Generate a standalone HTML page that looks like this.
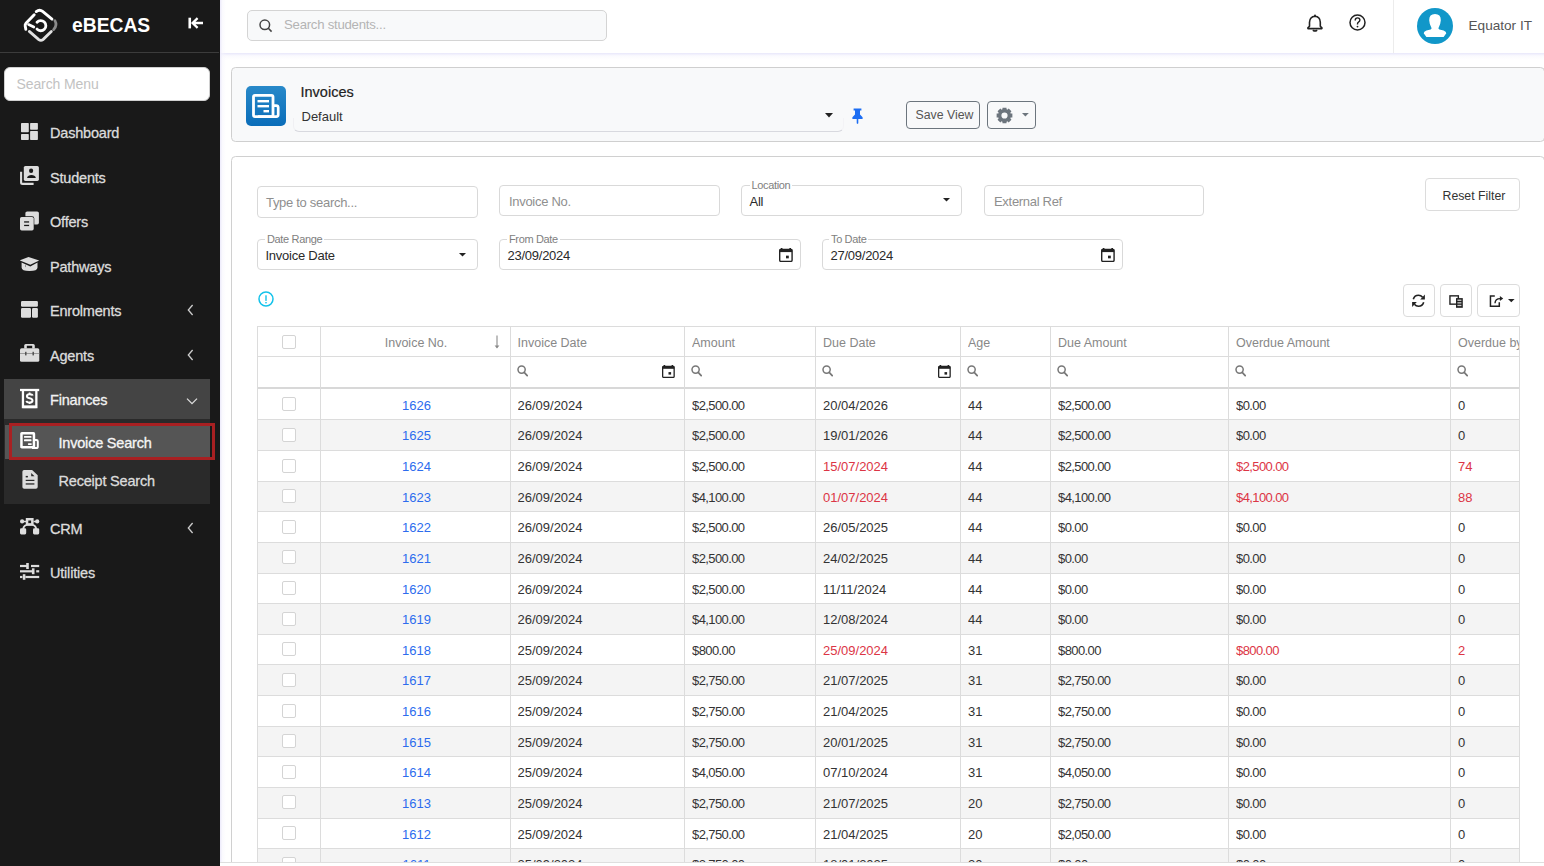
<!DOCTYPE html>
<html><head><meta charset="utf-8"><title>Invoices</title>
<style>
*{box-sizing:border-box;margin:0;padding:0}
html,body{width:1544px;height:866px;overflow:hidden;background:#fff;font-family:"Liberation Sans",sans-serif;position:relative}
.abs{position:absolute}
#side{position:absolute;left:0;top:0;width:220px;height:866px;background:#191919}
#side .sep{position:absolute;left:0;top:52px;width:219px;height:1px;background:#3c3c3c}
#side .brand{position:absolute;left:72px;top:14.5px;font-size:19.3px;font-weight:bold;color:#fff;letter-spacing:0px}
#side .msearch{position:absolute;left:4px;top:67px;width:206px;height:34px;background:#fff;border-radius:6px;border:1px solid #d0d0d0}
#side .msearch span{position:absolute;left:11.5px;top:7.5px;font-size:14px;color:#c2c2c2;letter-spacing:-0.1px}
.mi{position:absolute;left:50px;font-size:14.5px;color:#dcdcdc;-webkit-text-stroke:0.3px #dcdcdc;white-space:nowrap;letter-spacing:-0.2px}
.mic{position:absolute;left:20px}
.chev{position:absolute;left:186px}
#top{position:absolute;left:220px;top:0;width:1324px;height:53px;background:#fff}
#topshadow{position:absolute;left:220px;top:53px;width:1324px;height:7px;background:linear-gradient(#e8e7fa,rgba(245,244,253,0.5) 40%,rgba(255,255,255,0))}
#leftshadow{position:absolute;left:220px;top:0;width:6px;height:866px;background:linear-gradient(90deg,#eceafb,rgba(246,245,253,0.5) 40%,rgba(255,255,255,0))}
.ssearch{position:absolute;left:247px;top:10px;width:360px;height:31px;background:#f8f9fa;border:1px solid #d4d4d4;border-radius:5px}
.ssearch span{position:absolute;left:36px;top:6.3px;font-size:13.2px;letter-spacing:-0.25px;color:#b4b4b4}
.vsep{position:absolute;left:1393px;top:0;width:1px;height:53px;background:#ececec}
.avatar{position:absolute;left:1417px;top:7.5px;width:36px;height:36px;border-radius:50%;background:#1197c9;overflow:hidden}
.uname{position:absolute;left:1468.5px;top:17.5px;font-size:13.6px;color:#555}
.card1{position:absolute;left:231px;top:67px;width:1314px;height:75px;background:#f8f9fa;border:1px solid #cfcfcf;border-radius:4.5px}
.card2{position:absolute;left:231px;top:156px;width:1314px;height:720px;background:#fff;border:1px solid #d0d0d0;border-radius:4.5px}
.tile{position:absolute;left:246px;top:86px;width:40px;height:40px;border-radius:5px;background:linear-gradient(#2889c9,#0a6db9)}
.h-title{position:absolute;left:300.5px;top:83.5px;font-size:14.5px;color:#222;-webkit-text-stroke:0.2px #222}
.h-default{position:absolute;left:301.5px;top:108.5px;font-size:13px;color:#333}
.h-underline{position:absolute;left:293px;top:118px;width:551px;height:14px;border-bottom:1px solid #d8d9df;border-left:1px solid #f0f0f3;border-right:1px solid #f3f3f6;border-bottom-left-radius:6px;border-bottom-right-radius:6px}
.btn{position:absolute;border:1px solid #6c757d;border-radius:4px;background:transparent}
.inp{position:absolute;border:1px solid #d9d9d9;border-radius:4px;background:#fff}
.ph{position:absolute;font-size:13px;color:#8f8f8f;letter-spacing:-0.3px;white-space:nowrap}
.val{position:absolute;font-size:13px;color:#2a2a2a;letter-spacing:-0.25px;white-space:nowrap}
.lbl{position:absolute;font-size:11px;color:#808080;background:#fff;padding:0 2px;line-height:12px;letter-spacing:-0.35px;white-space:nowrap}
.wbtn{position:absolute;border:1px solid #dcdcdc;border-radius:4px;background:#fff}
.tbl{position:absolute;left:0;top:0}
.rowbg{position:absolute;left:257px;width:1262.5px}
.hl{position:absolute;left:257px;width:1263px;height:1px;background:#dcdcdc}
.hl.thick{height:2px;background:#d8d8d8}
.vl{position:absolute;top:326px;width:1px;height:540px;background:#dcdcdc}
.th{position:absolute;height:30px;line-height:33px;font-size:12.5px;color:#888;white-space:nowrap;overflow:hidden}
.td{position:absolute;font-size:13px;color:#333;white-space:nowrap;overflow:hidden}
.td.link{color:#2c6cee}
.td.red{color:#dc3545}
.td.amt{letter-spacing:-0.6px}
.cb{position:absolute;width:14px;height:14px;border:1px solid #d4d4d4;border-radius:2px;background:#fff}
.fic{position:absolute;line-height:0}
.sortic{position:absolute}
#bottomcover{position:absolute;left:220px;top:862px;width:1324px;height:4px;background:#fff;border-top:1px solid #dedede}

</style></head><body>
<div id="side">
  <svg class="abs" style="left:20px;top:5px" width="42" height="42" viewBox="0 0 42 42">
    <path d="M16.2 6.6Q19.6 3.9 22.6 6.4L32 14.2" fill="none" stroke="#fff" stroke-width="2.8" stroke-linecap="round"/>
    <path d="M14.2 9.8L6 18.2Q4.9 19.4 5.2 21L5.8 24.2" fill="none" stroke="#fff" stroke-width="2.9" stroke-linecap="round"/>
    <path d="M8.6 19.6L13.8 22" fill="none" stroke="#fff" stroke-width="2.8" stroke-linecap="round"/>
    <path d="M17 17.2A5.1 5.1 0 1 1 17 24.1" fill="none" stroke="#fff" stroke-width="2.8" stroke-linecap="round"/>
    <path d="M9.3 26.4L18.8 34.6Q20.9 36.2 23 34.6L31.3 26.4" fill="none" stroke="#e2e2e2" stroke-width="2.8" stroke-linecap="round"/>
    <path d="M34.9 15.6Q37.6 20.2 33.6 24.6" fill="none" stroke="#8a8a8a" stroke-width="2.8" stroke-linecap="round"/>
  </svg>
  <div class="brand">eBECAS</div>
  <svg class="abs" style="left:187px;top:16px" width="17" height="14" viewBox="0 0 17 14"><path d="M2.75 1.7v10.7" stroke="#fff" stroke-width="2.6"/><path d="M16 7H6.5M10.6 2.2L5.6 7l5 4.9" fill="none" stroke="#fff" stroke-width="2.3"/></svg>
  <div class="sep"></div>
  <div class="msearch"><span>Search Menu</span></div>

  <!-- finances highlight / submenu -->
  <div class="abs" style="left:4px;top:379px;width:206px;height:40px;background:#444"></div>
  <div class="abs" style="left:4px;top:419px;width:206px;height:85px;background:#2a2a2a"></div>
  <div class="abs" style="left:5px;top:425px;width:205px;height:34px;background:#555"></div>
  <div class="abs" style="left:9px;top:423px;width:206px;height:37px;border:3px solid #a82022"></div>

  <!-- icons -->
  <svg class="mic" style="left:21px;top:123px" width="17" height="17" viewBox="0 0 17 17" fill="#ddd"><rect x="0" y="0" width="7.8" height="9.3" rx="0.7"/><rect x="9.1" y="0" width="7.8" height="6.8" rx="0.7"/><rect x="0" y="11" width="7.8" height="5.9" rx="0.7"/><rect x="9.1" y="8.1" width="7.8" height="8.8" rx="0.7"/></svg>
  <div class="mi" style="top:124.5px">Dashboard</div>

  <svg class="mic" style="left:20px;top:166px" width="19" height="19" viewBox="0 0 19 19"><path d="M1.1 5.7V16.4Q1.1 17.85 2.6 17.85H13.6" fill="none" stroke="#ddd" stroke-width="2.1"/><rect x="3.8" y="0" width="15.1" height="14.9" rx="1.6" fill="#ddd"/><ellipse cx="11.1" cy="4.8" rx="2.1" ry="2.3" fill="#191919"/><path d="M7 11.9Q8 9.1 11.4 9.1Q14.9 9.1 15.9 11.9z" fill="#191919"/></svg>
  <div class="mi" style="top:169.5px">Students</div>

  <svg class="mic" style="left:20px;top:210.5px" width="20" height="20" viewBox="0 0 20 20"><rect x="5.4" y="0.4" width="13.5" height="13" rx="1.7" fill="#ddd"/><rect x="-0.6" y="5.3" width="14.9" height="14.7" rx="2.2" fill="#191919"/><rect x="0" y="5.9" width="13.7" height="13.5" rx="1.7" fill="#ddd"/><rect x="4.1" y="10.3" width="5" height="1.3" fill="#191919"/><rect x="4.1" y="13.8" width="5" height="1.3" fill="#191919"/></svg>
  <div class="mi" style="top:214.0px">Offers</div>

  <svg class="mic" style="left:20px;top:256px" width="20" height="16" viewBox="0 0 20 16" fill="#ddd"><path d="M8.5 0.9L19.2 4.4L10.3 8.7L-0.2 4.4z"/><path d="M1.6 6.6L10.3 10.6L17.5 6.6V11.5Q17.5 15 9.5 15Q1.6 15 1.6 11.5z"/><rect x="5.1" y="8.5" width="0.7" height="2.6" fill="#777"/></svg>
  <div class="mi" style="top:258.5px">Pathways</div>

  <svg class="mic" style="left:21px;top:301px" width="17" height="17" viewBox="0 0 17 17" fill="#ddd"><rect x="0" y="0" width="16.9" height="5.8" rx="1.2"/><rect x="0" y="7" width="10" height="9.8" rx="1.2"/><rect x="11" y="7" width="5.9" height="9.8" rx="1.2"/></svg>
  <div class="mi" style="top:302.5px">Enrolments</div>
  <svg class="chev" style="left:186px;top:304px" width="8" height="12" viewBox="0 0 8 12"><path d="M6.6 1L2.3 6l4.3 5" fill="none" stroke="#ccc" stroke-width="1.3"/></svg>

  <svg class="mic" style="left:20px;top:344px" width="20" height="19" viewBox="0 0 20 19" fill="#ddd"><path d="M4.2 4.4V1.6Q4.2 0 5.8 0h7.4q1.6 0 1.6 1.6v2.8h-2.6V1.8H6.8v2.6z"/><rect x="0" y="4.3" width="19.3" height="13.5" rx="1.6"/><rect x="0" y="9" width="19.3" height="0.8" fill="#8a8a8a"/><rect x="5.1" y="7.8" width="1.4" height="3.6" fill="#4a4a4a"/><rect x="12.5" y="7.8" width="1.4" height="3.6" fill="#4a4a4a"/></svg>
  <div class="mi" style="top:347.5px">Agents</div>
  <svg class="chev" style="left:186px;top:349px" width="8" height="12" viewBox="0 0 8 12"><path d="M6.6 1L2.3 6l4.3 5" fill="none" stroke="#ccc" stroke-width="1.3"/></svg>

  <svg class="mic" style="left:20px;top:388px" width="20" height="21" viewBox="0 0 20 21"><rect x="0" y="0.85" width="19.2" height="2.3" fill="#fff"/><path d="M2.95 3v16H16.35V3" fill="none" stroke="#fff" stroke-width="2.3"/><rect x="2.95" y="17.5" width="13.4" height="2.6" fill="#fff"/><path d="M12.6 7.6Q12.3 6.2 9.6 6.2Q6.9 6.2 6.9 8.3Q6.9 9.8 9.6 10.3Q12.5 10.9 12.5 12.7Q12.5 14.5 9.6 14.5Q6.8 14.5 6.5 12.8" fill="none" stroke="#fff" stroke-width="2"/><path d="M9.6 4.6v2M9.6 14v1.9" stroke="#fff" stroke-width="1.8"/></svg>
  <div class="mi" style="top:391.5px;color:#f2f2f2;-webkit-text-stroke:0.3px #f2f2f2">Finances</div>
  <svg class="chev" style="left:186px;top:397px" width="12" height="9" viewBox="0 0 12 9"><path d="M1 1.6l5 5 5-5" fill="none" stroke="#ddd" stroke-width="1.3"/></svg>

  <svg class="mic" style="left:20px;top:432px" width="19" height="17" viewBox="0 0 19 17"><rect x="1.45" y="1.25" width="12.5" height="14.1" rx="0.4" fill="none" stroke="#fff" stroke-width="2.5"/><path d="M14 8.1h2.4q1.4 0 1.4 1.4v4.9q0 1.6-1.6 1.6H12" fill="none" stroke="#fff" stroke-width="2"/><rect x="4" y="3.9" width="7.5" height="1.9" rx="0.5" fill="#fff"/><rect x="4" y="7.3" width="7.5" height="2" rx="0.5" fill="#fff"/><rect x="7.9" y="11.2" width="3.9" height="1.8" rx="0.7" fill="#fff"/></svg>
  <div class="mi" style="left:58.5px;top:434.5px;color:#f5f5f5;-webkit-text-stroke:0.3px #f5f5f5">Invoice Search</div>

  <svg class="mic" style="left:21.5px;top:470px" width="16" height="19" viewBox="0 0 16 19"><path d="M2 0H10.1L15.7 5.3V17Q15.7 18.8 13.9 18.8H2.2Q0.4 18.8 0.4 17V1.8Q0.4 0 2 0z" fill="#ddd"/><path d="M9.2 2.9V6.2H12.5z" fill="#2a2a2a"/><rect x="3.7" y="5.9" width="2.2" height="1.5" fill="#2a2a2a"/><rect x="3.7" y="9.8" width="8.7" height="1.2" fill="#2a2a2a"/><rect x="3.7" y="13.3" width="8.7" height="1.3" fill="#2a2a2a"/></svg>
  <div class="mi" style="left:58.5px;top:473.0px">Receipt Search</div>

  <svg class="mic" style="left:20px;top:517.5px" width="20" height="17" viewBox="0 0 20 17" fill="#ddd"><path d="M2 3.4h4M13.5 3.4h4" stroke="#ddd" stroke-width="1.5"/><circle cx="2.1" cy="3.4" r="2.1"/><circle cx="17.2" cy="3.4" r="2.1"/><path d="M5.8 0h7.8v7.8H5.8z M8.3 2.5v2.8h2.8V2.5z" fill-rule="evenodd"/><path d="M3.2 11Q3.5 6.6 9.7 6.4Q15.9 6.6 16.2 11" fill="none" stroke="#ddd" stroke-width="1.9"/><rect x="0" y="10.2" width="6.2" height="6.2" rx="1.3"/><rect x="13" y="10.2" width="6.2" height="6.2" rx="1.3"/></svg>
  <div class="mi" style="top:521.0px">CRM</div>
  <svg class="chev" style="left:186px;top:522px" width="8" height="12" viewBox="0 0 8 12"><path d="M6.6 1L2.3 6l4.3 5" fill="none" stroke="#ccc" stroke-width="1.3"/></svg>

  <svg class="mic" style="left:20px;top:563px" width="20" height="17" viewBox="0 0 20 17" fill="#ddd"><rect x="0" y="1.9" width="7.5" height="2.2"/><rect x="6.2" y="0" width="2.6" height="6"/><rect x="11" y="1.9" width="8.2" height="2.2"/><rect x="0" y="7.2" width="12.5" height="2.2"/><rect x="11.9" y="5.3" width="2.6" height="5.9"/><rect x="16.2" y="7.2" width="3" height="2.2"/><rect x="0" y="12.9" width="2.4" height="2.2"/><rect x="2.8" y="11.2" width="2.6" height="5.6"/><rect x="5.4" y="12.9" width="13.8" height="2.2"/></svg>
  <div class="mi" style="top:565.0px">Utilities</div>
</div>

<div id="top"></div>
<div class="ssearch"><svg class="abs" style="left:11px;top:8px" width="14" height="14" viewBox="0 0 14 14"><circle cx="5.8" cy="5.8" r="4.8" fill="none" stroke="#444" stroke-width="1.5"/><path d="M9.3 9.3l3.3 3.3" stroke="#444" stroke-width="1.6"/></svg><span>Search students...</span></div>
<svg class="abs" style="left:1306px;top:14px" width="18" height="19" viewBox="0 0 18 19"><path d="M9 2.3Q14.1 2.7 14.3 8.2V12.2L15.9 13.9V14.6H1.9V13.9L3.5 12.2V8.2Q3.8 2.7 9 2.3z" fill="none" stroke="#222" stroke-width="1.6" stroke-linejoin="round"/><circle cx="9" cy="1.6" r="1" fill="#222"/><path d="M7.3 16.5Q9 17.6 10.7 16.5" fill="none" stroke="#222" stroke-width="1.5" stroke-linecap="round"/></svg>
<svg class="abs" style="left:1349.3px;top:14.4px" width="17" height="17" viewBox="0 0 17 17"><circle cx="8.5" cy="8.5" r="7.5" fill="none" stroke="#222" stroke-width="1.5"/><path d="M6.2 6.4q0-2.5 2.4-2.5q2.3 0 2.3 2.2q0 1.4-1.4 2.1q-1 .5-1 1.8v.4" fill="none" stroke="#222" stroke-width="1.4"/><circle cx="8.5" cy="12.6" r="0.9" fill="#222"/></svg>
<div class="vsep"></div>
<div class="avatar"><svg width="36" height="36" viewBox="0 0 36 36"><path d="M18 6.1Q23.9 6.1 23.8 12.2Q23.6 16.2 21.6 19.8Q21 21 22.4 21.6L26.6 22.6Q29.3 23.5 29.3 25.3L26.6 29.1H9.4L6.7 25.3Q6.7 23.5 9.4 22.6L13.6 21.6Q15 21 14.4 19.8Q12.4 16.2 12.2 12.2Q12.1 6.1 18 6.1z" fill="#fff"/></svg></div>
<div class="uname">Equator IT</div>
<div id="topshadow"></div>
<div id="leftshadow"></div>

<div class="card1"></div>
<div class="tile"><svg width="40" height="40" viewBox="0 0 40 40"><rect x="7.5" y="9.3" width="19.5" height="21.3" rx="1.5" fill="none" stroke="#fff" stroke-width="2.8"/><path d="M27 19.6h3.2q2 0 2 2v7.2q0 1.8-1.8 1.8H12" fill="none" stroke="#fff" stroke-width="2.7"/><rect x="11.5" y="14" width="11.5" height="2.4" fill="#fff"/><rect x="11.5" y="19" width="11.5" height="2.4" fill="#fff"/><rect x="17.5" y="24" width="5.5" height="2.4" fill="#fff"/></svg></div>
<div class="h-title">Invoices</div>
<div class="h-default">Default</div>
<div class="h-underline"></div>
<svg class="abs" style="left:825px;top:112.5px" width="8" height="5" viewBox="0 0 8 5"><path d="M0 0h8L4 4.5z" fill="#222"/></svg>
<svg class="abs" style="left:852px;top:107.5px" width="11" height="16" viewBox="0 0 11 16"><path d="M1.6 0.4h7.8v2H8v4.2l2.6 2.6v1.7H6.3v4.4L5.5 16L4.7 15.3v-4.4H0.4V9.2L3 6.6V2.4H1.6z" fill="#1d6ef3"/></svg>
<div class="btn" style="left:906px;top:101px;width:74px;height:28px"><span style="position:absolute;left:8.5px;top:5.5px;font-size:12.3px;color:#555">Save View</span></div>
<div class="btn" style="left:987px;top:101px;width:49px;height:28px">
<svg class="abs" style="left:8.1px;top:4.6px" width="17" height="17" viewBox="0 0 17 17"><path fill="#6c757d" fill-rule="evenodd" d="M6.39 2.35 L6.54 0.64 L10.46 0.64 L10.61 2.35 L11.36 2.66 L12.67 1.55 L15.45 4.33 L14.34 5.64 L14.65 6.39 L16.36 6.54 L16.36 10.46 L14.65 10.61 L14.34 11.36 L15.45 12.67 L12.67 15.45 L11.36 14.34 L10.61 14.65 L10.46 16.36 L6.54 16.36 L6.39 14.65 L5.64 14.34 L4.33 15.45 L1.55 12.67 L2.66 11.36 L2.35 10.61 L0.64 10.46 L0.64 6.54 L2.35 6.39 L2.66 5.64 L1.55 4.33 L4.33 1.55 L5.64 2.66Z M11.60 8.5 A3.1 3.1 0 1 0 5.40 8.5 A3.1 3.1 0 1 0 11.60 8.5Z"/></svg>
<svg class="abs" style="left:33.5px;top:11px" width="7" height="4" viewBox="0 0 7 4"><path d="M0 0h6.8L3.4 3.4z" fill="#6c757d"/></svg>
</div>

<div class="card2"></div>
<!-- filters -->
<div class="inp" style="left:257px;top:186px;width:221px;height:31.5px"><span class="ph" style="left:8px;top:8px">Type to search...</span></div>
<div class="inp" style="left:499px;top:185px;width:221px;height:30.5px"><span class="ph" style="left:9px;top:7.5px">Invoice No.</span></div>
<div class="inp" style="left:741px;top:185px;width:221px;height:30.5px"><span class="val" style="left:7.5px;top:8px">All</span></div>
<div class="lbl" style="left:749.5px;top:178.5px">Location</div>
<svg class="abs" style="left:943px;top:198px" width="7" height="4" viewBox="0 0 7 4"><path d="M0 0h7L3.5 3.6z" fill="#222"/></svg>
<div class="inp" style="left:984px;top:185px;width:220px;height:30.5px"><span class="ph" style="left:9px;top:7.5px">External Ref</span></div>
<div class="wbtn" style="left:1425px;top:178px;width:95px;height:33px"><span style="position:absolute;left:16.5px;top:9.5px;font-size:12.3px;color:#333">Reset Filter</span></div>

<div class="inp" style="left:257px;top:239px;width:221px;height:30.5px"><span class="val" style="left:7.5px;top:8px">Invoice Date</span></div>
<div class="lbl" style="left:265px;top:232.5px">Date Range</div>
<svg class="abs" style="left:459px;top:253px" width="7" height="4" viewBox="0 0 7 4"><path d="M0 0h7L3.5 3.6z" fill="#222"/></svg>
<div class="inp" style="left:499px;top:239px;width:302px;height:30.5px"><span class="val" style="left:7.5px;top:8px">23/09/2024</span></div>
<div class="lbl" style="left:507px;top:232.5px">From Date</div>
<div class="inp" style="left:822px;top:239px;width:301px;height:30.5px"><span class="val" style="left:7.5px;top:8px">27/09/2024</span></div>
<div class="lbl" style="left:829px;top:232.5px">To Date</div>
<svg class="abs" style="left:778.5px;top:247.5px" width="14" height="14" viewBox="0 0 13 13"><rect x="1.6" y="0" width="1.6" height="1.5" fill="#222"/><rect x="9.6" y="0" width="1.6" height="1.5" fill="#222"/><rect x="0.65" y="1.3" width="11.5" height="11.1" rx="1" fill="none" stroke="#222" stroke-width="1.3"/><rect x="0.6" y="1" width="11.6" height="2.8" fill="#222"/><rect x="6.5" y="7.1" width="2.6" height="2.5" fill="#222"/></svg>
<svg class="abs" style="left:1100.5px;top:247.5px" width="14" height="14" viewBox="0 0 13 13"><rect x="1.6" y="0" width="1.6" height="1.5" fill="#222"/><rect x="9.6" y="0" width="1.6" height="1.5" fill="#222"/><rect x="0.65" y="1.3" width="11.5" height="11.1" rx="1" fill="none" stroke="#222" stroke-width="1.3"/><rect x="0.6" y="1" width="11.6" height="2.8" fill="#222"/><rect x="6.5" y="7.1" width="2.6" height="2.5" fill="#222"/></svg>

<svg class="abs" style="left:258.3px;top:291.2px" width="16" height="16" viewBox="0 0 16 16"><circle cx="8" cy="8" r="7" fill="none" stroke="#12c2ea" stroke-width="1.5"/><rect x="7.3" y="4.3" width="1.4" height="5.6" fill="#12c2ea"/><rect x="7.3" y="11" width="1.4" height="1.4" fill="#12c2ea"/></svg>

<div class="wbtn" style="left:1403px;top:284px;width:32px;height:32.5px"></div><svg class="abs" style="left:1411px;top:294px" width="15" height="14" viewBox="0 0 15 14"><path d="M2.3 5.2Q3.5 1.3 7.5 1.3Q10 1.3 11.6 3.2" fill="none" stroke="#222" stroke-width="1.6"/><path d="M13.9 0.6V5.4H9.2z" fill="#222"/><path d="M12.7 8.2Q11.5 12.2 7.5 12.2Q5 12.2 3.4 10.3" fill="none" stroke="#222" stroke-width="1.6"/><path d="M1.1 12.9V8.1H5.8z" fill="#222"/></svg>
<div class="wbtn" style="left:1440px;top:284px;width:32px;height:32.5px"></div><svg class="abs" style="left:1448px;top:294px" width="16" height="15" viewBox="0 0 16 15"><rect x="1.95" y="1.85" width="8.4" height="8.3" fill="none" stroke="#222" stroke-width="1.4"/><rect x="8" y="4.1" width="6.8" height="9.7" fill="#222"/><rect x="9.4" y="5.6" width="4" height="1.3" fill="#ccc"/><rect x="9.4" y="8.2" width="4" height="1.3" fill="#ccc"/><rect x="9.4" y="10.8" width="4" height="1.3" fill="#ccc"/></svg>
<div class="wbtn" style="left:1477px;top:284px;width:43px;height:32.5px"></div><svg class="abs" style="left:1489px;top:294px" width="16" height="14" viewBox="0 0 16 14"><path d="M5.8 1.9H1.45V12.2H10.3V8.3" fill="none" stroke="#222" stroke-width="1.5"/><path d="M6 9.2Q6.2 4.6 11.2 4.6" fill="none" stroke="#222" stroke-width="1.4"/><path d="M10.9 2.1L14.2 4.6L10.9 7.1z" fill="#222"/></svg><svg class="abs" style="left:1507.5px;top:299px" width="7" height="4" viewBox="0 0 7 4"><path d="M0 0h6.6L3.3 3.2z" fill="#222"/></svg>

<div class="tbl"><div class="rowbg" style="top:388.80px;height:30.63px;background:#fff"></div><div class="rowbg" style="top:419.43px;height:30.63px;background:#f4f4f4"></div><div class="rowbg" style="top:450.06px;height:30.63px;background:#fff"></div><div class="rowbg" style="top:480.69px;height:30.63px;background:#f4f4f4"></div><div class="rowbg" style="top:511.32px;height:30.63px;background:#fff"></div><div class="rowbg" style="top:541.95px;height:30.63px;background:#f4f4f4"></div><div class="rowbg" style="top:572.58px;height:30.63px;background:#fff"></div><div class="rowbg" style="top:603.21px;height:30.63px;background:#f4f4f4"></div><div class="rowbg" style="top:633.84px;height:30.63px;background:#fff"></div><div class="rowbg" style="top:664.47px;height:30.63px;background:#f4f4f4"></div><div class="rowbg" style="top:695.10px;height:30.63px;background:#fff"></div><div class="rowbg" style="top:725.73px;height:30.63px;background:#f4f4f4"></div><div class="rowbg" style="top:756.36px;height:30.63px;background:#fff"></div><div class="rowbg" style="top:786.99px;height:30.63px;background:#f4f4f4"></div><div class="rowbg" style="top:817.62px;height:30.63px;background:#fff"></div><div class="rowbg" style="top:848.25px;height:30.63px;background:#f4f4f4"></div><div class="hl" style="top:326px"></div><div class="hl" style="top:356px"></div><div class="hl thick" style="top:386.5px"></div><div class="hl" style="top:419.40px"></div><div class="hl" style="top:450.03px"></div><div class="hl" style="top:480.66px"></div><div class="hl" style="top:511.29px"></div><div class="hl" style="top:541.92px"></div><div class="hl" style="top:572.55px"></div><div class="hl" style="top:603.18px"></div><div class="hl" style="top:633.81px"></div><div class="hl" style="top:664.44px"></div><div class="hl" style="top:695.07px"></div><div class="hl" style="top:725.70px"></div><div class="hl" style="top:756.33px"></div><div class="hl" style="top:786.96px"></div><div class="hl" style="top:817.59px"></div><div class="hl" style="top:848.22px"></div><div class="vl" style="left:256.5px"></div><div class="vl" style="left:319.5px"></div><div class="vl" style="left:509.5px"></div><div class="vl" style="left:684.0px"></div><div class="vl" style="left:815.0px"></div><div class="vl" style="left:960.0px"></div><div class="vl" style="left:1050.0px"></div><div class="vl" style="left:1228.0px"></div><div class="vl" style="left:1450.0px"></div><div class="vl" style="left:1519.0px"></div><div class="cb" style="left:282px;top:335px"></div><div class="th" style="left:321px;width:190px;text-align:center;top:327px">Invoice No.</div><svg class="sortic" style="left:492.4px;top:334.5px" width="10" height="14" viewBox="0 0 10 14"><path d="M5 0.5v12" fill="none" stroke="#8a8a8a" stroke-width="1.1"/><path d="M2.6 10.4L5 13.4L7.4 10.4z" fill="#8a8a8a"/></svg><div class="th" style="left:517.5px;top:327px;width:166.5px">Invoice Date</div><div class="th" style="left:692.0px;top:327px;width:123.0px">Amount</div><div class="th" style="left:823.0px;top:327px;width:137.0px">Due Date</div><div class="th" style="left:968.0px;top:327px;width:82.0px">Age</div><div class="th" style="left:1058.0px;top:327px;width:170.0px">Due Amount</div><div class="th" style="left:1236.0px;top:327px;width:214.0px">Overdue Amount</div><div class="th" style="left:1458.0px;top:327px;width:61.0px">Overdue by</div><div class="fic" style="left:516.5px;top:365px"><svg width="11" height="12" viewBox="0 0 11 12"><circle cx="4.6" cy="4.6" r="3.6" fill="none" stroke="#777" stroke-width="1.5"/><path d="M7.2 7.4l3 3.2" stroke="#777" stroke-width="1.7" stroke-linecap="round"/></svg></div><div class="fic" style="left:691.0px;top:365px"><svg width="11" height="12" viewBox="0 0 11 12"><circle cx="4.6" cy="4.6" r="3.6" fill="none" stroke="#777" stroke-width="1.5"/><path d="M7.2 7.4l3 3.2" stroke="#777" stroke-width="1.7" stroke-linecap="round"/></svg></div><div class="fic" style="left:822.0px;top:365px"><svg width="11" height="12" viewBox="0 0 11 12"><circle cx="4.6" cy="4.6" r="3.6" fill="none" stroke="#777" stroke-width="1.5"/><path d="M7.2 7.4l3 3.2" stroke="#777" stroke-width="1.7" stroke-linecap="round"/></svg></div><div class="fic" style="left:967.0px;top:365px"><svg width="11" height="12" viewBox="0 0 11 12"><circle cx="4.6" cy="4.6" r="3.6" fill="none" stroke="#777" stroke-width="1.5"/><path d="M7.2 7.4l3 3.2" stroke="#777" stroke-width="1.7" stroke-linecap="round"/></svg></div><div class="fic" style="left:1057.0px;top:365px"><svg width="11" height="12" viewBox="0 0 11 12"><circle cx="4.6" cy="4.6" r="3.6" fill="none" stroke="#777" stroke-width="1.5"/><path d="M7.2 7.4l3 3.2" stroke="#777" stroke-width="1.7" stroke-linecap="round"/></svg></div><div class="fic" style="left:1235.0px;top:365px"><svg width="11" height="12" viewBox="0 0 11 12"><circle cx="4.6" cy="4.6" r="3.6" fill="none" stroke="#777" stroke-width="1.5"/><path d="M7.2 7.4l3 3.2" stroke="#777" stroke-width="1.7" stroke-linecap="round"/></svg></div><div class="fic" style="left:1457.0px;top:365px"><svg width="11" height="12" viewBox="0 0 11 12"><circle cx="4.6" cy="4.6" r="3.6" fill="none" stroke="#777" stroke-width="1.5"/><path d="M7.2 7.4l3 3.2" stroke="#777" stroke-width="1.7" stroke-linecap="round"/></svg></div><div class="fic" style="left:662.0px;top:365px"><svg width="13" height="13" viewBox="0 0 13 13"><rect x="1.6" y="0" width="1.6" height="1.5" fill="#222"/><rect x="9.6" y="0" width="1.6" height="1.5" fill="#222"/><rect x="0.65" y="1.3" width="11.5" height="11.1" rx="1" fill="none" stroke="#222" stroke-width="1.3"/><rect x="0.6" y="1" width="11.6" height="2.8" fill="#222"/><rect x="6.5" y="7.1" width="2.6" height="2.5" fill="#222"/></svg></div><div class="fic" style="left:938.0px;top:365px"><svg width="13" height="13" viewBox="0 0 13 13"><rect x="1.6" y="0" width="1.6" height="1.5" fill="#222"/><rect x="9.6" y="0" width="1.6" height="1.5" fill="#222"/><rect x="0.65" y="1.3" width="11.5" height="11.1" rx="1" fill="none" stroke="#222" stroke-width="1.3"/><rect x="0.6" y="1" width="11.6" height="2.8" fill="#222"/><rect x="6.5" y="7.1" width="2.6" height="2.5" fill="#222"/></svg></div><div class="cb" style="left:282px;top:397.30px"></div><div class="td link" style="left:321.5px;width:190px;text-align:center;top:390.80px;height:30.63px;line-height:30.63px">1626</div><div class="td" style="left:517.5px;top:390.80px;height:30.63px;line-height:30.63px;width:166.5px">26/09/2024</div><div class="td amt" style="left:692.0px;top:390.80px;height:30.63px;line-height:30.63px;width:123.0px">$2,500.00</div><div class="td" style="left:823.0px;top:390.80px;height:30.63px;line-height:30.63px;width:137.0px">20/04/2026</div><div class="td" style="left:968.0px;top:390.80px;height:30.63px;line-height:30.63px;width:82.0px">44</div><div class="td amt" style="left:1058.0px;top:390.80px;height:30.63px;line-height:30.63px;width:170.0px">$2,500.00</div><div class="td amt" style="left:1236.0px;top:390.80px;height:30.63px;line-height:30.63px;width:214.0px">$0.00</div><div class="td" style="left:1458.0px;top:390.80px;height:30.63px;line-height:30.63px;width:61.0px">0</div><div class="cb" style="left:282px;top:427.93px"></div><div class="td link" style="left:321.5px;width:190px;text-align:center;top:421.43px;height:30.63px;line-height:30.63px">1625</div><div class="td" style="left:517.5px;top:421.43px;height:30.63px;line-height:30.63px;width:166.5px">26/09/2024</div><div class="td amt" style="left:692.0px;top:421.43px;height:30.63px;line-height:30.63px;width:123.0px">$2,500.00</div><div class="td" style="left:823.0px;top:421.43px;height:30.63px;line-height:30.63px;width:137.0px">19/01/2026</div><div class="td" style="left:968.0px;top:421.43px;height:30.63px;line-height:30.63px;width:82.0px">44</div><div class="td amt" style="left:1058.0px;top:421.43px;height:30.63px;line-height:30.63px;width:170.0px">$2,500.00</div><div class="td amt" style="left:1236.0px;top:421.43px;height:30.63px;line-height:30.63px;width:214.0px">$0.00</div><div class="td" style="left:1458.0px;top:421.43px;height:30.63px;line-height:30.63px;width:61.0px">0</div><div class="cb" style="left:282px;top:458.56px"></div><div class="td link" style="left:321.5px;width:190px;text-align:center;top:452.06px;height:30.63px;line-height:30.63px">1624</div><div class="td" style="left:517.5px;top:452.06px;height:30.63px;line-height:30.63px;width:166.5px">26/09/2024</div><div class="td amt" style="left:692.0px;top:452.06px;height:30.63px;line-height:30.63px;width:123.0px">$2,500.00</div><div class="td red" style="left:823.0px;top:452.06px;height:30.63px;line-height:30.63px;width:137.0px">15/07/2024</div><div class="td" style="left:968.0px;top:452.06px;height:30.63px;line-height:30.63px;width:82.0px">44</div><div class="td amt" style="left:1058.0px;top:452.06px;height:30.63px;line-height:30.63px;width:170.0px">$2,500.00</div><div class="td red amt" style="left:1236.0px;top:452.06px;height:30.63px;line-height:30.63px;width:214.0px">$2,500.00</div><div class="td red" style="left:1458.0px;top:452.06px;height:30.63px;line-height:30.63px;width:61.0px">74</div><div class="cb" style="left:282px;top:489.19px"></div><div class="td link" style="left:321.5px;width:190px;text-align:center;top:482.69px;height:30.63px;line-height:30.63px">1623</div><div class="td" style="left:517.5px;top:482.69px;height:30.63px;line-height:30.63px;width:166.5px">26/09/2024</div><div class="td amt" style="left:692.0px;top:482.69px;height:30.63px;line-height:30.63px;width:123.0px">$4,100.00</div><div class="td red" style="left:823.0px;top:482.69px;height:30.63px;line-height:30.63px;width:137.0px">01/07/2024</div><div class="td" style="left:968.0px;top:482.69px;height:30.63px;line-height:30.63px;width:82.0px">44</div><div class="td amt" style="left:1058.0px;top:482.69px;height:30.63px;line-height:30.63px;width:170.0px">$4,100.00</div><div class="td red amt" style="left:1236.0px;top:482.69px;height:30.63px;line-height:30.63px;width:214.0px">$4,100.00</div><div class="td red" style="left:1458.0px;top:482.69px;height:30.63px;line-height:30.63px;width:61.0px">88</div><div class="cb" style="left:282px;top:519.82px"></div><div class="td link" style="left:321.5px;width:190px;text-align:center;top:513.32px;height:30.63px;line-height:30.63px">1622</div><div class="td" style="left:517.5px;top:513.32px;height:30.63px;line-height:30.63px;width:166.5px">26/09/2024</div><div class="td amt" style="left:692.0px;top:513.32px;height:30.63px;line-height:30.63px;width:123.0px">$2,500.00</div><div class="td" style="left:823.0px;top:513.32px;height:30.63px;line-height:30.63px;width:137.0px">26/05/2025</div><div class="td" style="left:968.0px;top:513.32px;height:30.63px;line-height:30.63px;width:82.0px">44</div><div class="td amt" style="left:1058.0px;top:513.32px;height:30.63px;line-height:30.63px;width:170.0px">$0.00</div><div class="td amt" style="left:1236.0px;top:513.32px;height:30.63px;line-height:30.63px;width:214.0px">$0.00</div><div class="td" style="left:1458.0px;top:513.32px;height:30.63px;line-height:30.63px;width:61.0px">0</div><div class="cb" style="left:282px;top:550.45px"></div><div class="td link" style="left:321.5px;width:190px;text-align:center;top:543.95px;height:30.63px;line-height:30.63px">1621</div><div class="td" style="left:517.5px;top:543.95px;height:30.63px;line-height:30.63px;width:166.5px">26/09/2024</div><div class="td amt" style="left:692.0px;top:543.95px;height:30.63px;line-height:30.63px;width:123.0px">$2,500.00</div><div class="td" style="left:823.0px;top:543.95px;height:30.63px;line-height:30.63px;width:137.0px">24/02/2025</div><div class="td" style="left:968.0px;top:543.95px;height:30.63px;line-height:30.63px;width:82.0px">44</div><div class="td amt" style="left:1058.0px;top:543.95px;height:30.63px;line-height:30.63px;width:170.0px">$0.00</div><div class="td amt" style="left:1236.0px;top:543.95px;height:30.63px;line-height:30.63px;width:214.0px">$0.00</div><div class="td" style="left:1458.0px;top:543.95px;height:30.63px;line-height:30.63px;width:61.0px">0</div><div class="cb" style="left:282px;top:581.08px"></div><div class="td link" style="left:321.5px;width:190px;text-align:center;top:574.58px;height:30.63px;line-height:30.63px">1620</div><div class="td" style="left:517.5px;top:574.58px;height:30.63px;line-height:30.63px;width:166.5px">26/09/2024</div><div class="td amt" style="left:692.0px;top:574.58px;height:30.63px;line-height:30.63px;width:123.0px">$2,500.00</div><div class="td" style="left:823.0px;top:574.58px;height:30.63px;line-height:30.63px;width:137.0px">11/11/2024</div><div class="td" style="left:968.0px;top:574.58px;height:30.63px;line-height:30.63px;width:82.0px">44</div><div class="td amt" style="left:1058.0px;top:574.58px;height:30.63px;line-height:30.63px;width:170.0px">$0.00</div><div class="td amt" style="left:1236.0px;top:574.58px;height:30.63px;line-height:30.63px;width:214.0px">$0.00</div><div class="td" style="left:1458.0px;top:574.58px;height:30.63px;line-height:30.63px;width:61.0px">0</div><div class="cb" style="left:282px;top:611.71px"></div><div class="td link" style="left:321.5px;width:190px;text-align:center;top:605.21px;height:30.63px;line-height:30.63px">1619</div><div class="td" style="left:517.5px;top:605.21px;height:30.63px;line-height:30.63px;width:166.5px">26/09/2024</div><div class="td amt" style="left:692.0px;top:605.21px;height:30.63px;line-height:30.63px;width:123.0px">$4,100.00</div><div class="td" style="left:823.0px;top:605.21px;height:30.63px;line-height:30.63px;width:137.0px">12/08/2024</div><div class="td" style="left:968.0px;top:605.21px;height:30.63px;line-height:30.63px;width:82.0px">44</div><div class="td amt" style="left:1058.0px;top:605.21px;height:30.63px;line-height:30.63px;width:170.0px">$0.00</div><div class="td amt" style="left:1236.0px;top:605.21px;height:30.63px;line-height:30.63px;width:214.0px">$0.00</div><div class="td" style="left:1458.0px;top:605.21px;height:30.63px;line-height:30.63px;width:61.0px">0</div><div class="cb" style="left:282px;top:642.34px"></div><div class="td link" style="left:321.5px;width:190px;text-align:center;top:635.84px;height:30.63px;line-height:30.63px">1618</div><div class="td" style="left:517.5px;top:635.84px;height:30.63px;line-height:30.63px;width:166.5px">25/09/2024</div><div class="td amt" style="left:692.0px;top:635.84px;height:30.63px;line-height:30.63px;width:123.0px">$800.00</div><div class="td red" style="left:823.0px;top:635.84px;height:30.63px;line-height:30.63px;width:137.0px">25/09/2024</div><div class="td" style="left:968.0px;top:635.84px;height:30.63px;line-height:30.63px;width:82.0px">31</div><div class="td amt" style="left:1058.0px;top:635.84px;height:30.63px;line-height:30.63px;width:170.0px">$800.00</div><div class="td red amt" style="left:1236.0px;top:635.84px;height:30.63px;line-height:30.63px;width:214.0px">$800.00</div><div class="td red" style="left:1458.0px;top:635.84px;height:30.63px;line-height:30.63px;width:61.0px">2</div><div class="cb" style="left:282px;top:672.97px"></div><div class="td link" style="left:321.5px;width:190px;text-align:center;top:666.47px;height:30.63px;line-height:30.63px">1617</div><div class="td" style="left:517.5px;top:666.47px;height:30.63px;line-height:30.63px;width:166.5px">25/09/2024</div><div class="td amt" style="left:692.0px;top:666.47px;height:30.63px;line-height:30.63px;width:123.0px">$2,750.00</div><div class="td" style="left:823.0px;top:666.47px;height:30.63px;line-height:30.63px;width:137.0px">21/07/2025</div><div class="td" style="left:968.0px;top:666.47px;height:30.63px;line-height:30.63px;width:82.0px">31</div><div class="td amt" style="left:1058.0px;top:666.47px;height:30.63px;line-height:30.63px;width:170.0px">$2,750.00</div><div class="td amt" style="left:1236.0px;top:666.47px;height:30.63px;line-height:30.63px;width:214.0px">$0.00</div><div class="td" style="left:1458.0px;top:666.47px;height:30.63px;line-height:30.63px;width:61.0px">0</div><div class="cb" style="left:282px;top:703.60px"></div><div class="td link" style="left:321.5px;width:190px;text-align:center;top:697.10px;height:30.63px;line-height:30.63px">1616</div><div class="td" style="left:517.5px;top:697.10px;height:30.63px;line-height:30.63px;width:166.5px">25/09/2024</div><div class="td amt" style="left:692.0px;top:697.10px;height:30.63px;line-height:30.63px;width:123.0px">$2,750.00</div><div class="td" style="left:823.0px;top:697.10px;height:30.63px;line-height:30.63px;width:137.0px">21/04/2025</div><div class="td" style="left:968.0px;top:697.10px;height:30.63px;line-height:30.63px;width:82.0px">31</div><div class="td amt" style="left:1058.0px;top:697.10px;height:30.63px;line-height:30.63px;width:170.0px">$2,750.00</div><div class="td amt" style="left:1236.0px;top:697.10px;height:30.63px;line-height:30.63px;width:214.0px">$0.00</div><div class="td" style="left:1458.0px;top:697.10px;height:30.63px;line-height:30.63px;width:61.0px">0</div><div class="cb" style="left:282px;top:734.23px"></div><div class="td link" style="left:321.5px;width:190px;text-align:center;top:727.73px;height:30.63px;line-height:30.63px">1615</div><div class="td" style="left:517.5px;top:727.73px;height:30.63px;line-height:30.63px;width:166.5px">25/09/2024</div><div class="td amt" style="left:692.0px;top:727.73px;height:30.63px;line-height:30.63px;width:123.0px">$2,750.00</div><div class="td" style="left:823.0px;top:727.73px;height:30.63px;line-height:30.63px;width:137.0px">20/01/2025</div><div class="td" style="left:968.0px;top:727.73px;height:30.63px;line-height:30.63px;width:82.0px">31</div><div class="td amt" style="left:1058.0px;top:727.73px;height:30.63px;line-height:30.63px;width:170.0px">$2,750.00</div><div class="td amt" style="left:1236.0px;top:727.73px;height:30.63px;line-height:30.63px;width:214.0px">$0.00</div><div class="td" style="left:1458.0px;top:727.73px;height:30.63px;line-height:30.63px;width:61.0px">0</div><div class="cb" style="left:282px;top:764.86px"></div><div class="td link" style="left:321.5px;width:190px;text-align:center;top:758.36px;height:30.63px;line-height:30.63px">1614</div><div class="td" style="left:517.5px;top:758.36px;height:30.63px;line-height:30.63px;width:166.5px">25/09/2024</div><div class="td amt" style="left:692.0px;top:758.36px;height:30.63px;line-height:30.63px;width:123.0px">$4,050.00</div><div class="td" style="left:823.0px;top:758.36px;height:30.63px;line-height:30.63px;width:137.0px">07/10/2024</div><div class="td" style="left:968.0px;top:758.36px;height:30.63px;line-height:30.63px;width:82.0px">31</div><div class="td amt" style="left:1058.0px;top:758.36px;height:30.63px;line-height:30.63px;width:170.0px">$4,050.00</div><div class="td amt" style="left:1236.0px;top:758.36px;height:30.63px;line-height:30.63px;width:214.0px">$0.00</div><div class="td" style="left:1458.0px;top:758.36px;height:30.63px;line-height:30.63px;width:61.0px">0</div><div class="cb" style="left:282px;top:795.49px"></div><div class="td link" style="left:321.5px;width:190px;text-align:center;top:788.99px;height:30.63px;line-height:30.63px">1613</div><div class="td" style="left:517.5px;top:788.99px;height:30.63px;line-height:30.63px;width:166.5px">25/09/2024</div><div class="td amt" style="left:692.0px;top:788.99px;height:30.63px;line-height:30.63px;width:123.0px">$2,750.00</div><div class="td" style="left:823.0px;top:788.99px;height:30.63px;line-height:30.63px;width:137.0px">21/07/2025</div><div class="td" style="left:968.0px;top:788.99px;height:30.63px;line-height:30.63px;width:82.0px">20</div><div class="td amt" style="left:1058.0px;top:788.99px;height:30.63px;line-height:30.63px;width:170.0px">$2,750.00</div><div class="td amt" style="left:1236.0px;top:788.99px;height:30.63px;line-height:30.63px;width:214.0px">$0.00</div><div class="td" style="left:1458.0px;top:788.99px;height:30.63px;line-height:30.63px;width:61.0px">0</div><div class="cb" style="left:282px;top:826.12px"></div><div class="td link" style="left:321.5px;width:190px;text-align:center;top:819.62px;height:30.63px;line-height:30.63px">1612</div><div class="td" style="left:517.5px;top:819.62px;height:30.63px;line-height:30.63px;width:166.5px">25/09/2024</div><div class="td amt" style="left:692.0px;top:819.62px;height:30.63px;line-height:30.63px;width:123.0px">$2,750.00</div><div class="td" style="left:823.0px;top:819.62px;height:30.63px;line-height:30.63px;width:137.0px">21/04/2025</div><div class="td" style="left:968.0px;top:819.62px;height:30.63px;line-height:30.63px;width:82.0px">20</div><div class="td amt" style="left:1058.0px;top:819.62px;height:30.63px;line-height:30.63px;width:170.0px">$2,050.00</div><div class="td amt" style="left:1236.0px;top:819.62px;height:30.63px;line-height:30.63px;width:214.0px">$0.00</div><div class="td" style="left:1458.0px;top:819.62px;height:30.63px;line-height:30.63px;width:61.0px">0</div><div class="cb" style="left:282px;top:856.75px"></div><div class="td link" style="left:321.5px;width:190px;text-align:center;top:850.25px;height:30.63px;line-height:30.63px">1611</div><div class="td" style="left:517.5px;top:850.25px;height:30.63px;line-height:30.63px;width:166.5px">25/09/2024</div><div class="td amt" style="left:692.0px;top:850.25px;height:30.63px;line-height:30.63px;width:123.0px">$2,750.00</div><div class="td" style="left:823.0px;top:850.25px;height:30.63px;line-height:30.63px;width:137.0px">18/01/2025</div><div class="td" style="left:968.0px;top:850.25px;height:30.63px;line-height:30.63px;width:82.0px">20</div><div class="td amt" style="left:1058.0px;top:850.25px;height:30.63px;line-height:30.63px;width:170.0px">$0.00</div><div class="td amt" style="left:1236.0px;top:850.25px;height:30.63px;line-height:30.63px;width:214.0px">$0.00</div><div class="td" style="left:1458.0px;top:850.25px;height:30.63px;line-height:30.63px;width:61.0px">0</div></div>
<div id="bottomcover"></div>
</body></html>
